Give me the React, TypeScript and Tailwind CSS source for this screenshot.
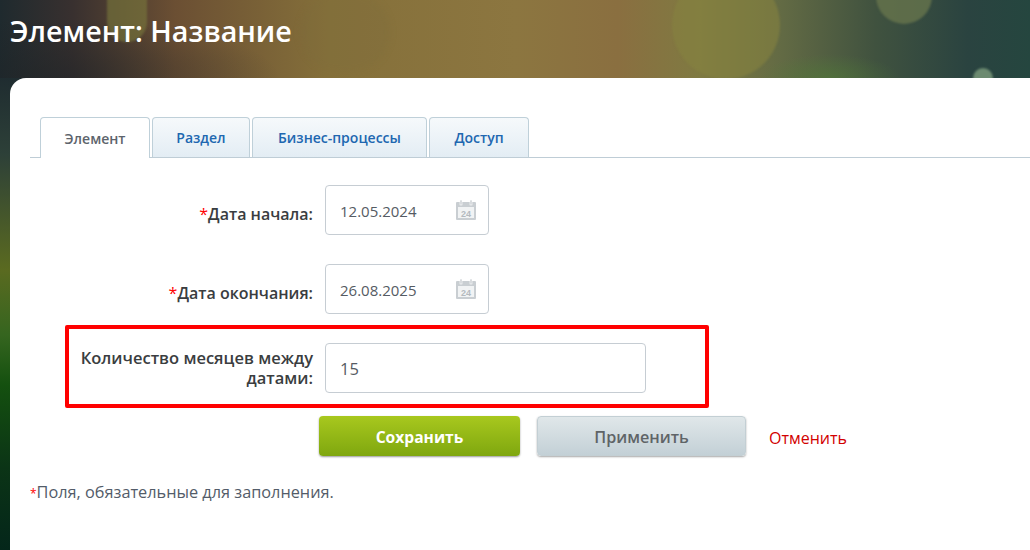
const FONT = "font-['Open_Sans','Noto_Sans',sans-serif]";

const TABS = [
  { label: "Элемент", width: "w-[110px]", active: true },
  { label: "Раздел", width: "w-[98px]", active: false },
  { label: "Бизнес-процессы", width: "w-[175px]", active: false },
  { label: "Доступ", width: "w-[100px]", active: false },
];

function CalendarIcon() {
  return (
    <svg viewBox="0 0 20 20" className="h-5 w-5 shrink-0" aria-hidden>
      <rect x="0" y="2" width="20" height="18" rx="1" fill="#c9ced2" />
      <rect x="4" y="0" width="2" height="5" fill="#c9ced2" stroke="#fff" strokeWidth="0.6" />
      <rect x="14" y="0" width="2" height="5" fill="#c9ced2" stroke="#fff" strokeWidth="0.6" />
      <rect x="2" y="7" width="16" height="11" fill="#f1f3f4" />
      <text x="10" y="16.5" textAnchor="middle" fontSize="9" fontWeight="700" fill="#b4babf" fontFamily="Liberation Sans, sans-serif">24</text>
    </svg>
  );
}

function DateRow({ label, value }: { label: string; value: string }) {
  return (
    <div className="flex items-center gap-3">
      <div className="w-[283px] shrink-0 pt-[7px] text-right text-[16px] leading-[20px] font-semibold text-[#3a3d40]">
        <span className="font-normal text-[#ff0000]">*</span>
        {label}
      </div>
      <div className="flex h-[50px] w-[164px] items-center justify-between rounded-[4px] border border-[#c6cdd3] pr-[12px] pl-[14px] text-[15px] text-[#555b63]">
        <span className="pt-[2px]">{value}</span>
        <CalendarIcon />
      </div>
    </div>
  );
}

export default function App() {
  return (
    <div className={`h-[550px] w-[1030px] overflow-hidden bg-[linear-gradient(180deg,#1f2c30_14%,#2d4038_28%,#5a6a20_49%,#35651f_61%,#14500f_70%,#0b3416_85%,#04261a_100%)] ${FONT}`}>
      {/* header photo: a blurred bokeh, so only soft gradients and a few discs */}
      <header className="relative flex h-[78px] items-center overflow-hidden bg-[linear-gradient(90deg,#1f2a2e_0%,#38302f_7%,#6b4f33_17%,#85703a_32%,#8c7640_50%,#8a6f40_60%,#7f7a42_68%,#626a44_76%,#40523f_85%,#2a4340_94%,#25463f_100%)] pb-[16px] pl-[10px]">
        <div className="absolute inset-0 bg-[radial-gradient(ellipse_220px_60px_at_60px_78px,rgba(30,35,38,0.55),transparent)]" />
        <div className="absolute inset-0 bg-[radial-gradient(ellipse_70px_24px_at_830px_78px,rgba(80,125,55,0.55),transparent)]" />
        <div className="absolute top-[-20px] left-[107px] h-[62px] w-[40px] rounded-full bg-[#7a7a3c]/60 blur-[1px]" />
        <div className="absolute top-[-8px] left-[300px] h-[80px] w-[90px] rounded-full bg-[#7d6a3a]/25 blur-[3px]" />
        <div className="absolute top-[-29px] left-[672px] h-[108px] w-[108px] rounded-full bg-[#868240]/60 blur-[1px]" />
        <div className="absolute top-[-32px] left-[876px] h-[56px] w-[56px] rounded-full bg-[#66744c]/80 blur-[1px]" />
        <div className="absolute top-[68px] left-[973px] h-[20px] w-[20px] rounded-full bg-[#6c8a70] blur-[1px]" />
        <h1 className="relative text-[28.7px] leading-[36px] font-semibold text-white">Элемент: Название</h1>
      </header>

      <main className="ml-[10px] h-[472px] rounded-tl-[16px] bg-white pt-[39px] pl-[20px]">
        <div className="flex h-[41px] gap-[2px] border-b border-[#bfcdd6] pl-[10px]">
          {TABS.map((t) =>
            t.active ? (
              <div key={t.label} className={`${t.width} -mb-px flex h-[41px] items-center justify-center rounded-t-[4px] border border-b-0 border-[#bfd0d9] bg-white text-[14px] font-semibold text-[#5d646c]`}>
                {t.label}
              </div>
            ) : (
              <div key={t.label} className={`${t.width} flex h-[40px] items-center justify-center rounded-t-[4px] border border-b-0 border-[#bfd0d9] bg-[linear-gradient(180deg,#f6f9fb,#e3edf4)] text-[14px] font-semibold text-[#2067b0]`}>
                {t.label}
              </div>
            ),
          )}
        </div>

        <div className="flex flex-col pt-[27px]">
          <div className="flex flex-col gap-[29px]">
            <DateRow label="Дата начала:" value="12.05.2024" />
            <DateRow label="Дата окончания:" value="26.08.2025" />
          </div>

          <div className="mt-[11px] ml-[35px] flex h-[83px] w-[644px] items-center gap-3 rounded-[2px] border-4 border-[#ff0000] pt-[2px]">
            <div className="w-[244px] shrink-0 pl-[4px] text-right text-[16.5px] leading-[20px] font-semibold text-[#3a3d40]">
              Количество месяцев между датами:
            </div>
            <div className="flex h-[50px] w-[321px] items-center rounded-[4px] border border-[#c6cdd3] pt-[3px] pl-[14px] text-[16.5px] text-[#555b63]">
              15
            </div>
          </div>

          <div className="mt-[8px] ml-[289px] flex items-center">
            <button className="h-[40px] w-[201px] rounded-[4px] bg-[linear-gradient(180deg,#a8c81e,#7fa70f)] pt-[3px] text-[15.6px] font-bold text-white shadow-[0_1px_2px_rgba(0,0,0,0.4)]">
              Сохранить
            </button>
            <button className="ml-[17px] h-[40px] w-[209px] rounded-[4px] border border-[#c3cfd4] bg-[linear-gradient(180deg,#e0e7e9,#c3d0d6)] pt-[3px] text-[16.2px] font-semibold text-[#5f6467] shadow-[0_1px_2px_rgba(0,0,0,0.35)]">
              Применить
            </button>
            <span className="ml-[23px] pt-[3px] text-[16px] text-[#d20000]">Отменить</span>
          </div>

          <p className="mt-[26px] text-[16.3px] leading-[20px] text-[#535c69]">
            <span className="text-[12px] text-[#ff0000]">*</span>Поля, обязательные для заполнения.
          </p>
        </div>
      </main>
    </div>
  );
}
